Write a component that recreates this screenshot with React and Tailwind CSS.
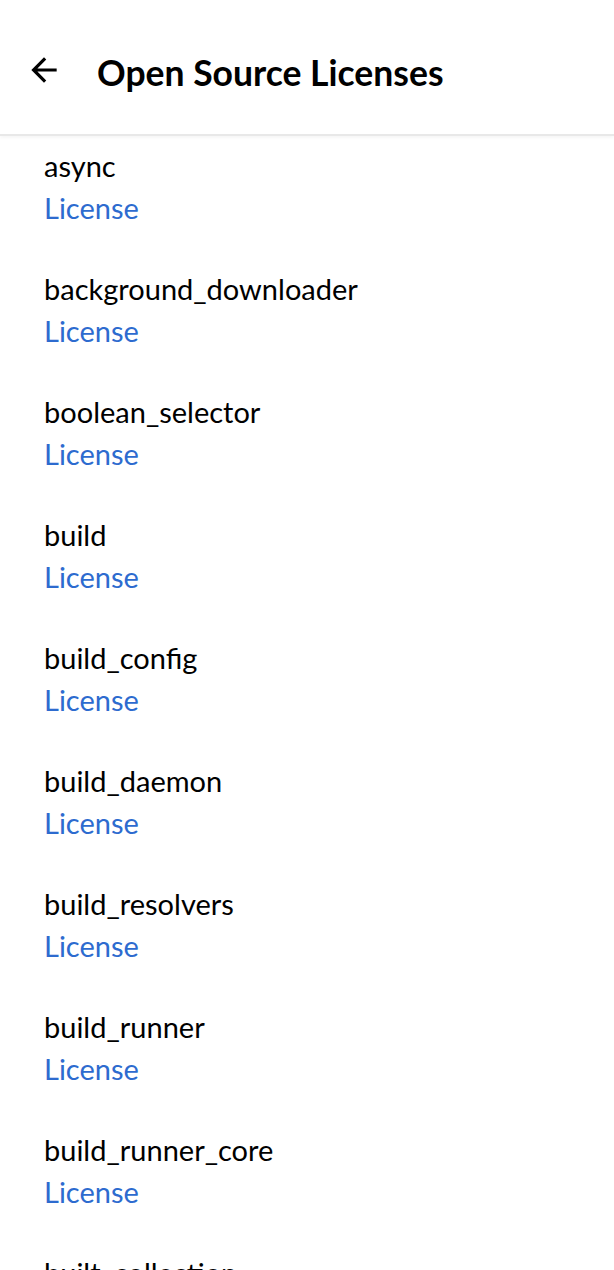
import React from 'react';

const packages = [
    'async',
    'background_downloader',
    'boolean_selector',
    'build',
    'build_config',
    'build_daemon',
    'build_resolvers',
    'build_runner',
    'build_runner_core',
    'built_collection',
];

export default function App() {
    return (
        <div className="h-[1270px] overflow-hidden bg-white font-['Lato',sans-serif] text-black">
            {/* HEADER */}
            <div className="h-[136px] pt-[6px] flex items-center border-b-2 border-[#e8e8e8] shadow-[0_2px_3px_rgba(0,0,0,0.04)]">
                <button className="ml-[25px] w-[38px] h-[38px] flex items-center justify-center">
                    <svg width="38" height="38" viewBox="0 0 24 24" fill="#000">
                        <path d="M20 11H7.83l5.59-5.59L12 4l-8 8 8 8 1.41-1.41L7.83 13H20v-2z" />
                    </svg>
                </button>
                <h1 className="ml-[34px] mt-[5px] text-[35.5px] font-bold leading-none">Open Source Licenses</h1>
            </div>

            {/* LIST */}
            <div className="flex flex-col">
                {packages.map(name => (
                    <div key={name} className="pl-[44px] pt-[9px] pb-[30px]">
                        <div className="text-[29px] leading-[42px]">{name}</div>
                        <div className="text-[29px] leading-[42px] text-[#2d6bcf]">License</div>
                    </div>
                ))}
            </div>
        </div>
    );
}
